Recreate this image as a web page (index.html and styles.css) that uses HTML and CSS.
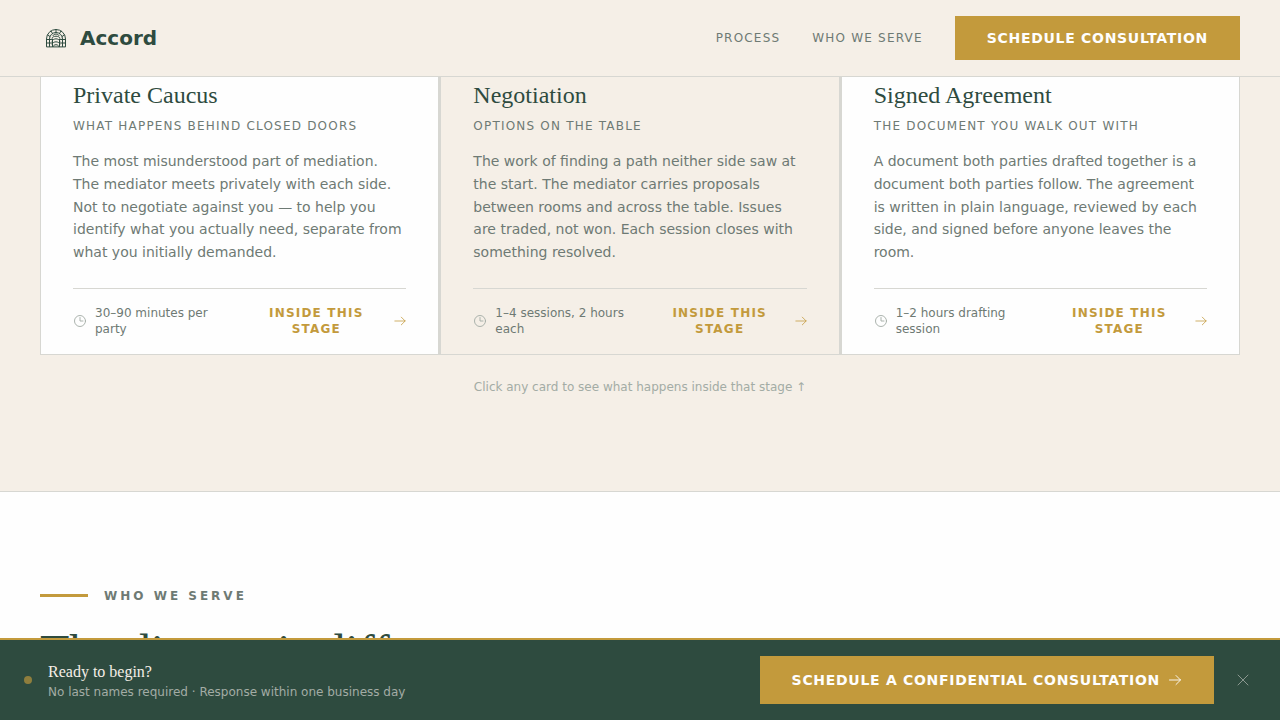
FILE: index.html
```html
<!DOCTYPE html>
<html lang="en">

<head>
    <meta charset="UTF-8">
    <meta name="viewport" content="width=device-width, initial-scale=1.0">
    <title>Accord</title>
    <link rel="stylesheet" href="styles.css">
</head>

<body>
    <header class="site-header">
        <a href="#" class="logo">
            <svg class="logo-icon" viewBox="0 0 24 24" aria-hidden="true">
                <path d="M2.5 20.5V13a9.5 9.5 0 0 1 19 0v7.5z" />
                <path d="M5.5 20.5V13a6.5 6.5 0 0 1 13 0v7.5" />
                <path d="M2.5 13.5h5M2.5 17h5.5M16.5 13.500h5M16 17h5.5M8.500 13v7.500M15.500 13v7.500" />
                <path d="M12 3.500v3M7 5l1.500 2.500M17 5l-1.500 2.500M3.500 9l2.500 1.500M20.500 9l-2.500 1.500" />
                <path d="M9 9.500c1-2 5-2 6 0M8 12c1-2.500 7-2.500 8 0M8 15c1.500-3 6.500-3 8 0M8 18c1.500-3 6.500-3 8 0M9 20.500c1-2.500 5-2.500 6 0" />
            </svg>
            <span>Accord</span>
        </a>
        <nav class="nav">
            <a href="#process" class="nav-link">Process</a>
            <a href="#serve" class="nav-link">Who we serve</a>
            <button type="button" class="btn">Schedule consultation</button>
        </nav>
    </header>

    <main>
        <section class="process" id="process">
            <div class="cards">
                <article class="card">
                    <h3>Private Caucus</h3>
                    <p class="card-sub">What happens behind closed doors</p>
                    <p class="card-text">The most misunderstood part of mediation. The mediator meets privately with each side. Not to negotiate against you — to help you identify what you actually need, separate from what you initially demanded.</p>
                    <div class="card-footer">
                        <div class="duration">
                            <svg class="icon" viewBox="0 0 14 14" aria-hidden="true"><circle cx="7" cy="7" r="5.500" /><path d="M7 3.500V7h3" /></svg>
                            <span>30–90 minutes per party</span>
                        </div>
                        <button type="button" class="stage-btn">
                            <span>Inside this stage</span>
                            <svg class="icon icon-small" viewBox="0 0 14 14" aria-hidden="true"><path d="M1 7h12M8.500 2.500L13 7l-4.500 4.500" /></svg>
                        </button>
                    </div>
                </article>
                <article class="card card-alt">
                    <h3>Negotiation</h3>
                    <p class="card-sub">Options on the table</p>
                    <p class="card-text">The work of finding a path neither side saw at the start. The mediator carries proposals between rooms and across the table. Issues are traded, not won. Each session closes with something resolved.</p>
                    <div class="card-footer">
                        <div class="duration">
                            <svg class="icon" viewBox="0 0 14 14" aria-hidden="true"><circle cx="7" cy="7" r="5.500" /><path d="M7 3.500V7h3" /></svg>
                            <span>1–4 sessions, 2 hours each</span>
                        </div>
                        <button type="button" class="stage-btn">
                            <span>Inside this stage</span>
                            <svg class="icon icon-small" viewBox="0 0 14 14" aria-hidden="true"><path d="M1 7h12M8.500 2.500L13 7l-4.500 4.500" /></svg>
                        </button>
                    </div>
                </article>
                <article class="card">
                    <h3>Signed Agreement</h3>
                    <p class="card-sub">The document you walk out with</p>
                    <p class="card-text">A document both parties drafted together is a document both parties follow. The agreement is written in plain language, reviewed by each side, and signed before anyone leaves the room.</p>
                    <div class="card-footer">
                        <div class="duration">
                            <svg class="icon" viewBox="0 0 14 14" aria-hidden="true"><circle cx="7" cy="7" r="5.500" /><path d="M7 3.500V7h3" /></svg>
                            <span>1–2 hours drafting session</span>
                        </div>
                        <button type="button" class="stage-btn">
                            <span>Inside this stage</span>
                            <svg class="icon icon-small" viewBox="0 0 14 14" aria-hidden="true"><path d="M1 7h12M8.500 2.500L13 7l-4.500 4.500" /></svg>
                        </button>
                    </div>
                </article>
            </div>
            <p class="hint">Click any card to see what happens inside that stage ↑</p>
        </section>

        <section class="serve" id="serve">
            <p class="eyebrow">Who we serve</p>
            <h2>The dispute is different</h2>
        </section>
    </main>

    <aside class="cta-bar">
        <span class="cta-dot"></span>
        <div class="cta-copy">
            <p class="cta-title">Ready to begin?</p>
            <p class="cta-note">No last names required · Response within one business day</p>
        </div>
        <button type="button" class="btn btn-large">
            <span>Schedule a confidential consultation</span>
            <svg class="icon" viewBox="0 0 14 14" aria-hidden="true"><path d="M1.500 7h11M8 2.500L12.500 7 8 11.500" /></svg>
        </button>
        <button type="button" class="close-btn" aria-label="Close">
            <svg viewBox="0 0 18 18" aria-hidden="true"><path d="M4 4l10 10M14 4L4 14" /></svg>
        </button>
    </aside>
</body>

</html>
```

FILE: styles.css
```css
:root {
    --green: #2e4b3f;
    --gold: #c39a3c;
    --cream: #f5efe7;
    --white: #fefefe;
    --grey: #6e7a74;
    --muted: #a3aca5;
    --line: #d7d7d2;
    --serif: "Liberation Serif", serif;
}

* {
    box-sizing: border-box;
}

body {
    margin: 0;
    min-height: 100vh;
    display: flex;
    flex-direction: column;
    font-family: "DejaVu Sans", sans-serif;
    font-size: 14px;
    color: var(--grey);
    background-color: var(--white);
}

h2,
h3,
p {
    margin: 0;
}

button {
    font-family: inherit;
    cursor: pointer;
}

svg {
    flex-shrink: 0;
    fill: none;
    stroke: currentColor;
    stroke-linecap: round;
    stroke-linejoin: round;
}

.icon {
    width: 14px;
    height: 14px;
    stroke-width: 0.9;
}

.icon-small {
    width: 12px;
    height: 12px;
}

/* Header */
.site-header {
    position: sticky;
    top: 0;
    z-index: 10;
    display: flex;
    align-items: center;
    justify-content: space-between;
    padding: 16px 40px;
    background-color: var(--cream);
    border-bottom: 1px solid var(--line);
}

.logo {
    display: flex;
    align-items: center;
    gap: 12px;
    padding-left: 4px;
    font-size: 20px;
    font-weight: bold;
    color: var(--green);
    text-decoration: none;
}

.logo-icon {
    width: 24px;
    height: 24px;
}

.nav {
    display: flex;
    align-items: center;
    gap: 32px;
}

.nav-link {
    font-size: 12px;
    letter-spacing: 0.1em;
    text-transform: uppercase;
    text-decoration: none;
    color: var(--grey);
}

.btn {
    display: flex;
    align-items: center;
    gap: 8px;
    min-height: 44px;
    padding: 0 32px;
    border: none;
    background-color: var(--gold);
    color: var(--white);
    font-size: 14px;
    font-weight: bold;
    letter-spacing: 0.05em;
    text-transform: uppercase;
}

.btn-large {
    min-height: 48px;
}

/* Process */
.process {
    padding: 0 40px 96px;
    background-color: var(--cream);
    border-bottom: 1px solid var(--line);
}

.cards {
    display: grid;
    grid-template-columns: repeat(3, 1fr);
    gap: 1px;
    background-color: var(--line);
}

.card {
    display: flex;
    flex-direction: column;
    padding: 3px 32px 17px;
    background-color: var(--white);
    border: 1px solid var(--line);
    border-top: none;
}

.card-alt {
    background-color: var(--cream);
}

.card h3 {
    font-family: var(--serif);
    font-size: 24px;
    font-weight: normal;
    line-height: 30px;
    color: var(--green);
}

.card-sub {
    margin-top: 8px;
    font-size: 12px;
    line-height: 16px;
    letter-spacing: 0.1em;
    text-transform: uppercase;
}

.card-text {
    margin: 16px 0 24px;
    line-height: 1.625;
}

.card-footer {
    display: flex;
    align-items: center;
    justify-content: space-between;
    margin-top: auto;
    padding-top: 16px;
    border-top: 1px solid var(--line);
    font-size: 12px;
    line-height: 16px;
}

.duration {
    display: flex;
    align-items: center;
    gap: 8px;
}

.duration .icon {
    color: var(--muted);
}

.stage-btn {
    display: flex;
    align-items: center;
    gap: 4px;
    padding: 0;
    border: none;
    background: none;
    color: var(--gold);
    font-size: 12px;
    font-weight: bold;
    line-height: 16px;
    letter-spacing: 0.1em;
    text-transform: uppercase;
}

.hint {
    margin-top: 24px;
    font-size: 12px;
    line-height: 16px;
    text-align: center;
    color: var(--muted);
}

/* Who we serve */
.serve {
    padding: 96px 40px 0;
}

.eyebrow {
    display: flex;
    align-items: center;
    gap: 16px;
    font-size: 12px;
    font-weight: bold;
    line-height: 16px;
    letter-spacing: 3px;
    text-transform: uppercase;
}

.eyebrow::before {
    content: "";
    width: 48px;
    height: 3px;
    background-color: var(--gold);
}

.serve h2 {
    margin-top: 24px;
    font-family: var(--serif);
    font-size: 48px;
    font-weight: normal;
    line-height: 48px;
    color: var(--green);
}

/* Bottom bar */
.cta-bar {
    position: fixed;
    right: 0;
    bottom: 0;
    left: 0;
    z-index: 10;
    display: flex;
    align-items: center;
    gap: 16px;
    padding: 16px 24px;
    background-color: var(--green);
    border-top: 2px solid var(--gold);
}

.cta-dot {
    width: 8px;
    height: 8px;
    border-radius: 50%;
    background-color: var(--gold);
    opacity: 0.65;
}

.cta-copy {
    flex: 1;
}

.cta-title {
    font-family: var(--serif);
    font-size: 16px;
    line-height: 24px;
    color: var(--cream);
}

.cta-note {
    font-size: 12px;
    line-height: 16px;
    color: var(--muted);
}

.close-btn {
    display: flex;
    padding: 4px;
    border: none;
    background: none;
    color: var(--muted);
}

.close-btn svg {
    width: 18px;
    height: 18px;
    opacity: 0.8;
}
```
